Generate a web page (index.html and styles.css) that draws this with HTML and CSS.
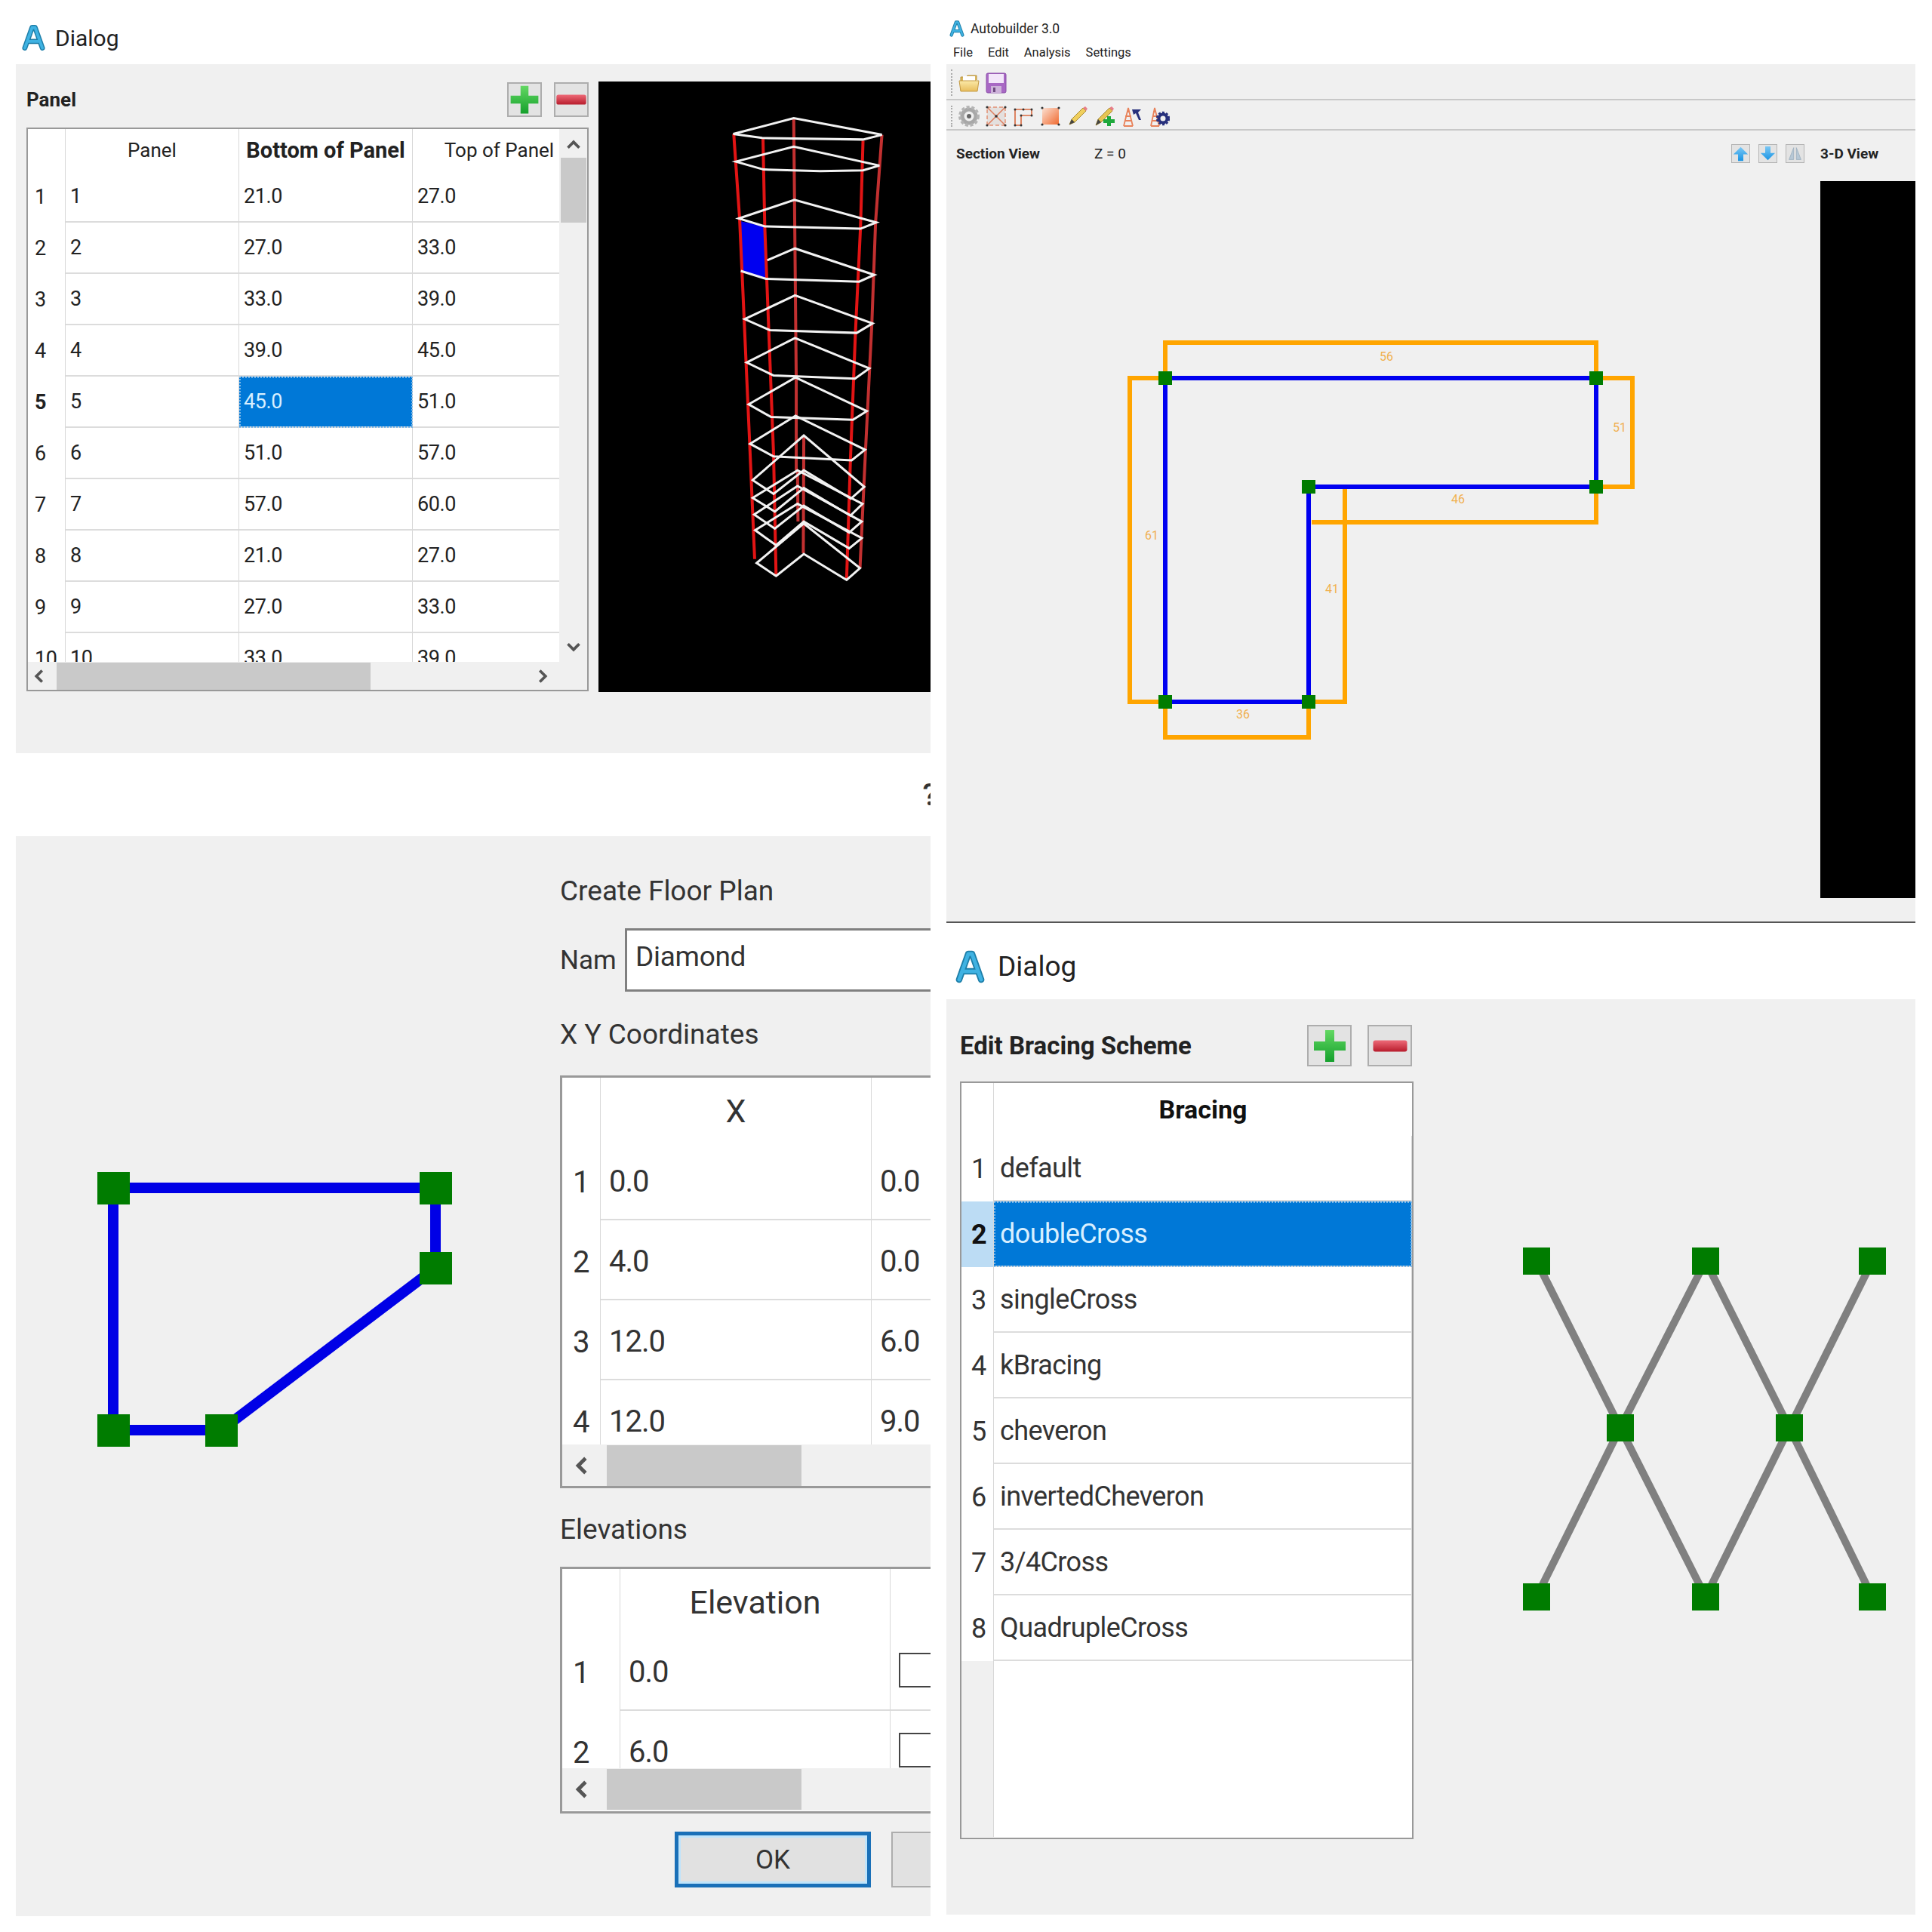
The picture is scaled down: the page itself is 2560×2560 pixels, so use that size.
FILE: index.html
```html
<!DOCTYPE html>
<html lang="en">
<head>
  <meta charset="UTF-8" />
  <title>Autobuilder 3.0 screens</title>
  <link rel="stylesheet" href="styles.css">
</head>
<body>

  <!-- shared symbols -->
  <svg class="defs" width="0" height="0">
    <defs>
      <symbol id="logo" viewBox="0 0 32 36">
        <path d="M4 32 L14 4 H18 L28 32 M9 23 H23" fill="none" stroke="#1d7ea8" stroke-width="7" stroke-linecap="round" stroke-linejoin="round"/>
        <path d="M4 32 L14 4 H18 L28 32 M9 23 H23" fill="none" stroke="#3fb2e2" stroke-width="4" stroke-linecap="round" stroke-linejoin="round"/>
      </symbol>
      <linearGradient id="greenFill" x1="0" y1="0" x2="0" y2="1">
        <stop offset="0" stop-color="#63d863"/>
        <stop offset="1" stop-color="#14a02c"/>
      </linearGradient>
      <linearGradient id="redFill" x1="0" y1="0" x2="0" y2="1">
        <stop offset="0" stop-color="#ee6a78"/>
        <stop offset="1" stop-color="#b81c2c"/>
      </linearGradient>
      <linearGradient id="blueFill" x1="0" y1="0" x2="0" y2="1">
        <stop offset="0" stop-color="#7cc8f4"/>
        <stop offset="1" stop-color="#1894e4"/>
      </linearGradient>
      <linearGradient id="folderFill" x1="0" y1="0" x2="0" y2="1">
        <stop offset="0" stop-color="#fbe9a8"/>
        <stop offset="1" stop-color="#e8bd5c"/>
      </linearGradient>
      <linearGradient id="squareFill" x1="0" y1="0" x2="1" y2="1">
        <stop offset="0" stop-color="#fbe0d2"/>
        <stop offset="1" stop-color="#f06a30"/>
      </linearGradient>
      <symbol id="plus" viewBox="0 0 32 32">
        <path d="M12 2 H20 V12 H30 V20 H20 V30 H12 V20 H2 V12 H12 Z" fill="url(#greenFill)"/>
      </symbol>
      <symbol id="minus" viewBox="0 0 32 32">
        <rect x="1" y="11" width="30" height="10" rx="2" fill="url(#redFill)"/>
      </symbol>
      <symbol id="chev-left" viewBox="0 0 16 16"><path d="M11 2 L5 8 L11 14" fill="none" stroke="#555" stroke-width="3"/></symbol>
      <symbol id="chev-right" viewBox="0 0 16 16"><path d="M5 2 L11 8 L5 14" fill="none" stroke="#555" stroke-width="3"/></symbol>
      <symbol id="chev-up" viewBox="0 0 16 16"><path d="M2 11 L8 5 L14 11" fill="none" stroke="#555" stroke-width="3"/></symbol>
      <symbol id="chev-down" viewBox="0 0 16 16"><path d="M2 5 L8 11 L14 5" fill="none" stroke="#555" stroke-width="3"/></symbol>
    </defs>
  </svg>

  <div class="desk">

    <!-- left column -->
    <div class="column">

      <!-- Panel dialog -->
      <div class="titlebar titlebar-panel">
        <svg class="logo"><use href="#logo"/></svg>
        <span>Dialog</span>
      </div>
      <div class="body panel-body">
        <div class="panel-left">
          <div class="head-row">
            <span class="head-title">Panel</span>
            <button class="icon-btn"><svg><use href="#plus"/></svg></button>
            <button class="icon-btn"><svg><use href="#minus"/></svg></button>
          </div>
          <div class="grid-box panel-grid">
            <div class="grid-top">
              <div class="grid-clip">
                <table>
                  <tr class="header">
                    <th class="rowhead"></th>
                    <th>Panel</th>
                    <th class="strong">Bottom of Panel</th>
                    <th>Top of Panel</th>
                  </tr>
                  <tr><th class="rowhead">1</th><td>1</td><td>21.0</td><td>27.0</td></tr>
                  <tr><th class="rowhead">2</th><td>2</td><td>27.0</td><td>33.0</td></tr>
                  <tr><th class="rowhead">3</th><td>3</td><td>33.0</td><td>39.0</td></tr>
                  <tr><th class="rowhead">4</th><td>4</td><td>39.0</td><td>45.0</td></tr>
                  <tr><th class="rowhead strong">5</th><td>5</td><td class="selected">45.0</td><td>51.0</td></tr>
                  <tr><th class="rowhead">6</th><td>6</td><td>51.0</td><td>57.0</td></tr>
                  <tr><th class="rowhead">7</th><td>7</td><td>57.0</td><td>60.0</td></tr>
                  <tr><th class="rowhead">8</th><td>8</td><td>21.0</td><td>27.0</td></tr>
                  <tr><th class="rowhead">9</th><td>9</td><td>27.0</td><td>33.0</td></tr>
                  <tr><th class="rowhead">10</th><td>10</td><td>33.0</td><td>39.0</td></tr>
                </table>
              </div>
              <div class="vscroll">
                <svg class="chev"><use href="#chev-up"/></svg>
                <div class="vthumb"></div>
                <svg class="chev chev-end"><use href="#chev-down"/></svg>
              </div>
            </div>
            <div class="hscroll">
              <svg class="chev"><use href="#chev-left"/></svg>
              <div class="hthumb"></div>
              <svg class="chev chev-end"><use href="#chev-right"/></svg>
            </div>
          </div>
        </div>

        <svg class="tower" viewBox="40 15 1318 1547" preserveAspectRatio="none">
          <polygon class="tower-panel" points="597,368 697,382 703,513 605,495"/>
          <polyline class="wire-red" points="577,148 600,360 610,500 640,930 660,1225"/>
          <polyline class="wire-red" points="693,160 700,382 708,515 735,960 745,1268"/>
          <polyline class="wire-dim" points="815,110 820,440 825,770 825,1000"/>
          <polyline class="wire-dim" points="855,915 853,1210"/>
          <polyline class="wire-dim" points="830,1000 832,1130"/>
          <polyline class="wire-red" points="1090,165 1080,385 1060,650 1040,975 1025,1275"/>
          <polyline class="wire-dim" points="1165,150 1140,370 1125,630 1100,950 1078,1248"/>
          <polygon class="wire" points="575,148 815,108 1165,150 1090,162 690,158"/>
          <polygon class="wire" points="585,218 815,180 1155,228 1090,240 920,242 695,238"/>
          <polygon class="wire" points="597,362 818,315 1143,372 1080,388 700,382"/>
          <polyline class="wire" points="605,495 705,515 1075,522 1135,505 820,438 710,468"/>
          <polygon class="wire" points="620,617 820,557 1128,628 1065,652 720,645"/>
          <polygon class="wire" points="628,727 820,665 1115,742 1058,768 735,760"/>
          <polygon class="wire" points="636,833 822,765 1105,850 1050,872 725,865"/>
          <polygon class="wire" points="642,933 822,862 1098,948 1045,975 735,965"/>
          <polygon class="wire" points="652,1025 855,912 1095,1042 1042,1072 855,1000 735,1060"/>
          <polygon class="wire" points="652,1070 830,1000 1088,1085 1040,1115 855,1045 740,1105"/>
          <polygon class="wire" points="658,1112 830,1040 1085,1130 1035,1158 855,1090 740,1148"/>
          <polygon class="wire" points="662,1152 830,1085 1085,1172 1035,1198 855,1130 745,1190"/>
          <polygon class="wire" points="668,1235 855,1135 1078,1248 1025,1278 855,1212 745,1268"/>
        </svg>
      </div>

      <!-- Create floor plan dialog -->
      <div class="titlebar titlebar-plan">
        <span class="help">?</span>
      </div>
      <div class="body plan-body">
        <svg class="plan-view" viewBox="21 1108 721 1431">
          <polyline class="beam" points="150,1574 577,1574 577,1680 293,1895 150,1895 150,1574"/>
          <rect class="node" x="129" y="1553" width="43" height="43"/>
          <rect class="node" x="556" y="1553" width="43" height="43"/>
          <rect class="node" x="556" y="1659" width="43" height="43"/>
          <rect class="node" x="129" y="1874" width="43" height="43"/>
          <rect class="node" x="272" y="1874" width="43" height="43"/>
        </svg>

        <div class="plan-form">
          <div class="form-label">Create Floor Plan</div>
          <div class="name-row">
            <span class="name-label">Nam</span>
            <div class="name-input">Diamond</div>
          </div>
          <div class="form-label label-xy">X Y Coordinates</div>
          <div class="grid-box large-grid xy-grid">
            <div class="grid-clip">
              <table>
                <tr class="header"><th class="rowhead"></th><th>X</th><th></th></tr>
                <tr><th class="rowhead">1</th><td>0.0</td><td>0.0</td></tr>
                <tr><th class="rowhead">2</th><td>4.0</td><td>0.0</td></tr>
                <tr><th class="rowhead">3</th><td>12.0</td><td>6.0</td></tr>
                <tr><th class="rowhead">4</th><td>12.0</td><td>9.0</td></tr>
              </table>
            </div>
            <div class="hscroll">
              <svg class="chev"><use href="#chev-left"/></svg>
              <div class="hthumb"></div>
            </div>
          </div>
          <div class="form-label label-elev">Elevations</div>
          <div class="grid-box large-grid elev-grid">
            <div class="grid-clip">
              <table>
                <tr class="header"><th class="rowhead"></th><th>Elevation</th><th></th></tr>
                <tr><th class="rowhead">1</th><td>0.0</td><td><span class="check"></span></td></tr>
                <tr><th class="rowhead">2</th><td>6.0</td><td><span class="check"></span></td></tr>
              </table>
            </div>
            <div class="hscroll">
              <svg class="chev"><use href="#chev-left"/></svg>
              <div class="hthumb"></div>
            </div>
          </div>
          <div class="form-buttons">
            <button class="push push-default">OK</button>
            <button class="push"></button>
          </div>
        </div>
      </div>
    </div>

    <!-- right column -->
    <div class="column">

      <!-- Main window -->
      <div class="titlebar titlebar-main">
        <div class="app-title">
          <svg class="logo logo-small"><use href="#logo"/></svg>
          <span>Autobuilder 3.0</span>
        </div>
        <div class="menu">
          <span>File</span><span>Edit</span><span>Analysis</span><span>Settings</span>
        </div>
      </div>
      <div class="body main-body">
        <div class="toolbar toolbar-file">
          <span class="grip"></span>
          <svg viewBox="0 0 28 28">
            <path d="M3 24 V6 H10 L12 4 H24 V10" fill="#d9b65a" stroke="#b8923c"/>
            <rect x="6" y="5" width="16" height="6" fill="#fff"/>
            <path d="M1 11 H27 L25 25 H3 Z" fill="url(#folderFill)" stroke="#c49a44"/>
          </svg>
          <svg viewBox="0 0 28 28">
            <rect x="1" y="1" width="26" height="26" rx="2" fill="#a868c4" stroke="#8a4ea8"/>
            <rect x="4" y="2" width="20" height="12" fill="#f3e6fa"/>
            <rect x="7" y="18" width="14" height="9" fill="#cdb2da"/>
            <rect x="10" y="20" width="3" height="6" fill="#6d4a80"/>
          </svg>
        </div>
        <div class="toolbar toolbar-draw">
          <span class="grip"></span>
          <svg viewBox="0 0 28 28">
            <circle cx="14" cy="14" r="9" fill="none" stroke="#a8a8a8" stroke-width="5"/>
            <circle cx="14" cy="14" r="12" fill="none" stroke="#b4b4b4" stroke-width="4" stroke-dasharray="4 2.6"/>
            <circle cx="14" cy="14" r="3" fill="#666"/>
          </svg>
          <svg viewBox="0 0 28 28">
            <rect x="2" y="2" width="24" height="24" fill="#e4e0de" stroke="#e0673a" stroke-dasharray="5 3"/>
            <path d="M2 2 L26 26 M26 2 L2 26" stroke="#e08060" stroke-width="1.6"/>
            <g fill="#333"><circle cx="2" cy="2" r="1.6"/><circle cx="26" cy="2" r="1.6"/><circle cx="2" cy="26" r="1.6"/><circle cx="26" cy="26" r="1.6"/><circle cx="14" cy="14" r="1.8"/></g>
          </svg>
          <svg viewBox="0 0 28 28">
            <path d="M3 26 V5 H25 V13 H11 V26 Z" fill="none" stroke="#d96a40" stroke-width="1.6"/>
            <g fill="#333"><circle cx="3" cy="5" r="1.5"/><circle cx="14" cy="5" r="1.5"/><circle cx="25" cy="5" r="1.5"/><circle cx="25" cy="13" r="1.5"/><circle cx="11" cy="13" r="1.5"/><circle cx="3" cy="26" r="1.5"/><circle cx="11" cy="26" r="1.5"/></g>
          </svg>
          <svg viewBox="0 0 28 28">
            <rect x="3" y="3" width="22" height="22" fill="url(#squareFill)"/>
            <g fill="#333"><circle cx="3" cy="3" r="1.6"/><circle cx="25" cy="3" r="1.6"/><circle cx="3" cy="25" r="1.6"/><circle cx="25" cy="25" r="1.6"/></g>
          </svg>
          <svg viewBox="0 0 28 28">
            <path d="M3 25 L6 18 L21 3 L25 7 L10 22 Z" fill="#f0cf5c" stroke="#a88a30"/>
            <path d="M21 3 L25 7 L27 4 L24 1 Z" fill="#e8808a"/>
            <path d="M3 25 L6 18 L10 22 Z" fill="#444"/>
          </svg>
          <svg viewBox="0 0 28 28">
            <path d="M2 26 L5 18 L20 3 L24 7 L9 22 Z" fill="#e6c454" stroke="#a88a30"/>
            <path d="M20 3 L24 7 L26 4 L23 1 Z" fill="#e8808a"/>
            <path d="M2 26 L5 18 L9 22 Z" fill="#444"/>
            <path d="M17 14 H22 V18 H27 V23 H22 V27 H17 V23 H12 V18 H17 Z" fill="#1ea83c"/>
          </svg>
          <svg viewBox="0 0 28 28">
            <path d="M3 27 L9 3 L15 27 M4 20 H14 M5 14 H13 M7 8 H11 M3 27 H15" fill="none" stroke="#e8825a" stroke-width="1.8"/>
            <path d="M14 5 H26 L22 9 L26 19 H23 L19 10 L16 12 Z" fill="#27307c"/>
          </svg>
          <svg viewBox="0 0 28 28">
            <path d="M3 27 L8 3 L14 27 M4 20 H13 M5 14 H12 M6 8 H10 M3 27 H14" fill="none" stroke="#e8825a" stroke-width="1.8"/>
            <circle cx="19" cy="17" r="5.5" fill="none" stroke="#27307c" stroke-width="4"/>
            <circle cx="19" cy="17" r="8" fill="none" stroke="#27307c" stroke-width="2.4" stroke-dasharray="3 2.2"/>
          </svg>
        </div>

        <div class="main-area">
          <div class="section">
            <div class="section-head">
              <span class="strong-label">Section View</span>
              <span class="z-label">Z = 0</span>
              <div class="view-btns">
                <button class="view-btn"><svg viewBox="0 0 24 24"><path d="M12 2 L23 13 H16 V23 H8 V13 H1 Z" fill="url(#blueFill)"/></svg></button>
                <button class="view-btn"><svg viewBox="0 0 24 24"><path d="M8 1 H16 V11 H23 L12 22 L1 11 H8 Z" fill="url(#blueFill)"/></svg></button>
                <button class="view-btn"><svg viewBox="0 0 24 24"><path d="M10 3 L3 21 H10 Z M14 3 L21 21 H14 Z" fill="#b7c8d6" stroke="#9eb0bf"/></svg></button>
              </div>
            </div>
            <svg class="section-view" viewBox="1254 240 1158 983">
              <polyline class="dim" points="1544,501 1497,501 1497,930 1544,930"/>
              <polyline class="dim" points="1544,501 1544,454 2115,454 2115,501"/>
              <polyline class="dim" points="2115,501 2163,501 2163,645 2115,645"/>
              <polyline class="dim" points="2115,645 2115,692 1738,692"/>
              <polyline class="dim" points="1782,645 1782,930 1734,930"/>
              <polyline class="dim" points="1544,930 1544,977 1734,977 1734,930"/>
              <polygon class="outline" points="1544,501 2115,501 2115,645 1734,645 1734,930 1544,930"/>
              <rect class="node" x="1535" y="492" width="18" height="18"/>
              <rect class="node" x="2106" y="492" width="18" height="18"/>
              <rect class="node" x="2106" y="636" width="18" height="18"/>
              <rect class="node" x="1725" y="636" width="18" height="18"/>
              <rect class="node" x="1535" y="921" width="18" height="18"/>
              <rect class="node" x="1725" y="921" width="18" height="18"/>
              <text class="dim-text" x="1837" y="478">56</text>
              <text class="dim-text" x="2146" y="572">51</text>
              <text class="dim-text" x="1932" y="667">46</text>
              <text class="dim-text" x="1526" y="715">61</text>
              <text class="dim-text" x="1765" y="786">41</text>
              <text class="dim-text" x="1647" y="952">36</text>
            </svg>
          </div>
          <div class="view3d">
            <div class="view3d-label">3-D View</div>
            <div class="view3d-canvas"></div>
          </div>
        </div>
      </div>

      <!-- Bracing dialog -->
      <div class="titlebar titlebar-bracing">
        <svg class="logo logo-large"><use href="#logo"/></svg>
        <span>Dialog</span>
      </div>
      <div class="body bracing-body">
        <div class="bracing-left">
          <div class="head-row bracing-head">
            <span class="head-title">Edit Bracing Scheme</span>
            <button class="icon-btn"><svg><use href="#plus"/></svg></button>
            <button class="icon-btn"><svg><use href="#minus"/></svg></button>
          </div>
          <div class="grid-box bracing-grid">
            <table>
              <tr class="header"><th class="rowhead"></th><th class="strong">Bracing</th></tr>
              <tr><th class="rowhead">1</th><td>default</td></tr>
              <tr><th class="rowhead strong current">2</th><td class="selected">doubleCross</td></tr>
              <tr><th class="rowhead">3</th><td>singleCross</td></tr>
              <tr><th class="rowhead">4</th><td>kBracing</td></tr>
              <tr><th class="rowhead">5</th><td>cheveron</td></tr>
              <tr><th class="rowhead">6</th><td>invertedCheveron</td></tr>
              <tr><th class="rowhead">7</th><td>3/4Cross</td></tr>
              <tr><th class="rowhead">8</th><td>QuadrupleCross</td></tr>
              <tr class="filler"><th class="rowhead"></th><td></td></tr>
            </table>
          </div>
        </div>
        <svg class="bracing-view" viewBox="1873 1326 665 1213">
          <polyline class="brace" points="2036,1673 2147,1894 2260,2118 2371,1894 2481,1673"/>
          <polyline class="brace" points="2036,2118 2147,1894 2260,1673 2371,1894 2481,2118"/>
          <rect class="node" x="2018" y="1655" width="36" height="36"/>
          <rect class="node" x="2242" y="1655" width="36" height="36"/>
          <rect class="node" x="2463" y="1655" width="36" height="36"/>
          <rect class="node" x="2129" y="1876" width="36" height="36"/>
          <rect class="node" x="2353" y="1876" width="36" height="36"/>
          <rect class="node" x="2018" y="2100" width="36" height="36"/>
          <rect class="node" x="2242" y="2100" width="36" height="36"/>
          <rect class="node" x="2463" y="2100" width="36" height="36"/>
        </svg>
      </div>
    </div>
  </div>

</body>
</html>
```

FILE: styles.css
```css
* {
  box-sizing: border-box;
}

body {
  margin: 0;
  background-color: #fff;
  font-family: Roboto, 'Liberation Sans', sans-serif;
  color: #222;
}

button {
  font-family: inherit;
  padding: 0;
}

.defs {
  position: absolute;
}

.desk {
  display: grid;
  grid-template-columns: 1212px 1284px;
  column-gap: 21px;
  padding-left: 21px;
  align-items: start;
}

.column {
  display: flex;
  flex-direction: column;
  min-width: 0;
}

.body {
  background-color: #f0f0f0;
  overflow: hidden;
}

/* title bars */
.titlebar {
  display: flex;
  align-items: center;
  background-color: #fff;
  overflow: hidden;
}

.titlebar-panel {
  height: 85px;
  padding: 15px 0 0 8px;
  gap: 13px;
  font-size: 30px;
}

.titlebar-plan {
  height: 110px;
  justify-content: flex-end;
}

.help {
  font-size: 40px;
  font-weight: 500;
  margin-right: -9px;
  color: #333;
}

.titlebar-main {
  height: 85px;
  flex-direction: column;
  align-items: flex-start;
  padding-top: 24px;
}

.titlebar-bracing {
  height: 101px;
  padding: 14px 0 0 12px;
  gap: 17px;
  font-size: 37px;
}

.logo {
  width: 31px;
  height: 36px;
}

.logo-small {
  width: 20px;
  height: 22px;
}

.logo-large {
  width: 39px;
  height: 44px;
}

.app-title {
  display: flex;
  align-items: center;
  gap: 8px;
  height: 28px;
  padding-left: 4px;
  font-size: 17.5px;
}

.menu {
  display: flex;
  gap: 20px;
  margin-top: 8px;
  padding-left: 9px;
  font-size: 16.5px;
}

/* panel dialog */
.panel-body {
  display: flex;
  gap: 13px;
  height: 913px;
  padding: 23px 0 0 14px;
}

.panel-left {
  width: 745px;
}

.head-row {
  display: flex;
  align-items: center;
  gap: 16px;
  height: 47px;
}

.head-title {
  margin-right: auto;
  font-size: 26px;
  font-weight: 700;
}

.icon-btn {
  display: flex;
  align-items: center;
  justify-content: center;
  width: 46px;
  height: 46px;
  background-color: #e3e3e3;
  border: 2px solid #adadad;
}

.icon-btn svg {
  width: 42px;
  height: 42px;
}

.tower {
  flex: none;
  width: 440px;
  height: 809px;
  background-color: #000;
}

.tower-panel {
  fill: #0000f0;
}

.wire {
  fill: none;
  stroke: #f2f2f2;
  stroke-width: 3px;
  vector-effect: non-scaling-stroke;
}

.wire-red {
  fill: none;
  stroke: #e21414;
  stroke-width: 4px;
  vector-effect: non-scaling-stroke;
}

.wire-dim {
  fill: none;
  stroke: #c23030;
  stroke-width: 4px;
  vector-effect: non-scaling-stroke;
}

/* table widgets */
.grid-box {
  background-color: #fff;
  border: 2px solid #999;
  overflow: hidden;
}

.grid-top {
  display: flex;
}

.grid-clip {
  overflow: hidden;
}

table {
  border-collapse: separate;
  border-spacing: 0;
  table-layout: fixed;
}

th {
  font-weight: 400;
}

th, td {
  padding: 0;
  text-align: left;
  white-space: nowrap;
}

.header th {
  text-align: center;
  border-right: 1px solid #d8d8d8;
}

td {
  border-right: 1px solid #d8d8d8;
  border-bottom: 2px solid #dcdcdc;
}

.strong {
  font-weight: 700;
}

.selected {
  background-color: #0078d7;
  color: #d8efff;
  outline: 2px dotted #7db8e8;
  outline-offset: -2px;
}

.hscroll {
  display: flex;
  align-items: center;
  background-color: #f0f0f0;
}

.hthumb {
  background-color: #c9c9c9;
}

.vscroll {
  position: relative;
  flex: none;
  display: flex;
  flex-direction: column;
  align-items: center;
  background-color: #f0f0f0;
}

.chev {
  flex: none;
}

.panel-grid {
  width: 745px;
  height: 747px;
  margin-top: 14px;
  font-size: 27px;
  letter-spacing: -0.4px;
}

.panel-grid .grid-clip {
  width: 704px;
  height: 706px;
}

.panel-grid table {
  width: 740px;
}

.panel-grid th, .panel-grid td {
  width: 230px;
  height: 68px;
  padding-left: 6px;
}

.panel-grid .rowhead {
  width: 50px;
  padding-left: 9px;
  border-right: 1px solid #d8d8d8;
}

.panel-grid .header th {
  height: 56px;
  padding-left: 0;
  font-size: 26px;
  letter-spacing: 0;
}

.panel-grid .header .strong {
  font-size: 29px;
}

.panel-grid .vscroll {
  width: 37px;
  height: 706px;
}

.panel-grid .vscroll .chev {
  width: 20px;
  height: 20px;
  margin-top: 11px;
}

.vthumb {
  width: 34px;
  height: 86px;
  margin-top: 7px;
  background-color: #c9c9c9;
}

.panel-grid .vscroll .chev-end {
  margin-top: auto;
  margin-bottom: 10px;
}

.panel-grid .hscroll {
  height: 37px;
}

.panel-grid .hscroll .chev {
  width: 20px;
  height: 20px;
  margin-left: 5px;
}

.panel-grid .hthumb {
  width: 416px;
  height: 36px;
  margin-left: 13px;
}

.panel-grid .hscroll .chev-end {
  margin-left: 218px;
}

/* floor plan dialog */
.plan-body {
  display: flex;
  height: 1431px;
}

.plan-view {
  flex: none;
  width: 721px;
  height: 1431px;
}

.beam {
  fill: none;
  stroke: #0000e6;
  stroke-width: 14px;
  stroke-linejoin: miter;
}

.node {
  fill: #007c00;
}

.plan-form {
  flex: none;
  width: 700px;
  padding-top: 48px;
  font-size: 37px;
}

.form-label {
  height: 50px;
  line-height: 50px;
  color: #333;
}

.name-row {
  display: flex;
  align-items: center;
  gap: 14px;
  margin-top: 24px;
}

.name-label {
  width: 72px;
  font-size: 35px;
  color: #333;
}

.name-input {
  flex: 1;
  height: 84px;
  padding: 13px 0 0 11px;
  background-color: #fff;
  border: 3px solid #808080;
  color: #333;
  letter-spacing: -0.3px;
}

.label-xy {
  margin-top: 32px;
}

.label-elev {
  margin-top: 30px;
}

.large-grid {
  width: 700px;
  border-width: 3px;
  color: #333;
  font-size: 40px;
  letter-spacing: -1px;
}

.large-grid .grid-clip {
  width: 694px;
}

.large-grid table {
  width: 694px;
}

.large-grid th, .large-grid td {
  height: 106px;
  padding: 5px 0 0 11px;
}

.large-grid .rowhead {
  padding-left: 14px;
  border-right: 1px solid #d8d8d8;
}

.large-grid .header th {
  padding-left: 0;
  font-size: 43px;
  letter-spacing: 0;
}

.large-grid .hscroll {
  height: 56px;
}

.large-grid .hscroll .chev {
  width: 26px;
  height: 26px;
  margin-left: 13px;
}

.large-grid .hthumb {
  width: 258px;
  height: 54px;
}

.xy-grid {
  height: 547px;
  margin-top: 29px;
}

.xy-grid .grid-clip {
  height: 486px;
}

.xy-grid .rowhead {
  width: 51px;
}

.xy-grid th, .xy-grid td {
  width: 359px;
}

.xy-grid .header th {
  height: 83px;
}

.xy-grid .hthumb {
  margin-left: 20px;
}

.elev-grid {
  height: 327px;
  margin-top: 24px;
}

.elev-grid .grid-clip {
  height: 264px;
}

.elev-grid .rowhead {
  width: 77px;
}

.elev-grid th, .elev-grid td {
  width: 358px;
}

.elev-grid .header th {
  height: 82px;
}

.elev-grid .hthumb {
  margin-left: 20px;
}

.check {
  display: block;
  width: 60px;
  height: 46px;
  margin-top: -5px;
  border: 2px solid #444;
}

.form-buttons {
  display: flex;
  gap: 27px;
  margin-top: 24px;
  margin-left: 152px;
}

.push {
  width: 260px;
  height: 74px;
  font-size: 35px;
  color: #333;
  background-color: #e1e1e1;
  border: 2px solid #adadad;
}

.push-default {
  border: 5px solid #1a70b8;
  box-shadow: inset 0 0 0 3px #bfe4fb;
}

/* main window */
.toolbar {
  display: flex;
  align-items: center;
  gap: 8px;
  padding: 3px 0 0 6px;
  border-bottom: 2px solid #c8c8c8;
}

.toolbar svg {
  width: 28px;
  height: 28px;
}

.toolbar-file {
  height: 48px;
}

.toolbar-draw {
  height: 40px;
}

.grip {
  width: 2px;
  height: 80%;
  margin-right: 0;
  border-left: 2px dotted #aaa;
}

.main-area {
  display: flex;
  height: 1050px;
  border-bottom: 2px solid #555;
}

.section {
  flex: none;
  width: 1158px;
}

.section-head {
  display: flex;
  align-items: center;
  height: 67px;
  padding: 0 21px 6px 13px;
  font-size: 19px;
}

.strong-label {
  width: 183px;
  font-weight: 700;
}

.view-btns {
  display: flex;
  gap: 11px;
  margin-left: auto;
}

.view-btn {
  display: flex;
  align-items: center;
  justify-content: center;
  width: 25px;
  height: 25px;
  background-color: #e3e3e3;
  border: 1px solid #b4b4b4;
}

.view-btn svg {
  width: 21px;
  height: 21px;
}

.section-view {
  display: block;
  width: 1158px;
  height: 983px;
}

.dim {
  fill: none;
  stroke: #ffa500;
  stroke-width: 6px;
}

.outline {
  fill: none;
  stroke: #0000f0;
  stroke-width: 6px;
}

.dim-text {
  font-size: 16px;
  fill: #f0b050;
  text-anchor: middle;
}

.view3d {
  flex: none;
  width: 126px;
}

.view3d-label {
  height: 67px;
  padding-bottom: 6px;
  display: flex;
  align-items: center;
  font-size: 19px;
  font-weight: 700;
}

.view3d-canvas {
  height: 950px;
  background-color: #000;
}

/* bracing dialog */
.bracing-body {
  display: flex;
  height: 1213px;
}

.bracing-left {
  flex: none;
  width: 619px;
  padding: 34px 0 0 18px;
}

.bracing-head {
  width: 601px;
  height: 55px;
  gap: 21px;
  padding-right: 2px;
}

.bracing-head .head-title {
  font-size: 33px;
}

.bracing-head .icon-btn {
  width: 59px;
  height: 55px;
}

.bracing-head .icon-btn svg {
  width: 48px;
  height: 48px;
}

.bracing-grid {
  width: 601px;
  height: 1004px;
  margin-top: 20px;
  font-size: 36px;
  letter-spacing: -0.6px;
  color: #333;
}

.bracing-grid table {
  width: 597px;
}

.bracing-grid th, .bracing-grid td {
  height: 87px;
  padding-left: 8px;
}

.bracing-grid .rowhead {
  width: 43px;
  padding-left: 13px;
  border-right: 1px solid #d8d8d8;
}

.bracing-grid .header th {
  height: 70px;
  padding-left: 0;
  border-right: 0;
  color: #111;
  font-size: 34px;
  letter-spacing: 0;
}

.bracing-grid .header .rowhead {
  border-right: 1px solid #d8d8d8;
}

.bracing-grid .current {
  background-color: #bcdcf4;
  color: #111;
}

.bracing-grid .filler .rowhead {
  height: 233px;
  background-color: #f0f0f0;
}

.bracing-grid .filler td {
  border: 0;
}

.bracing-view {
  flex: 1;
  height: 1213px;
}

.brace {
  fill: none;
  stroke: #808080;
  stroke-width: 10px;
}
```
